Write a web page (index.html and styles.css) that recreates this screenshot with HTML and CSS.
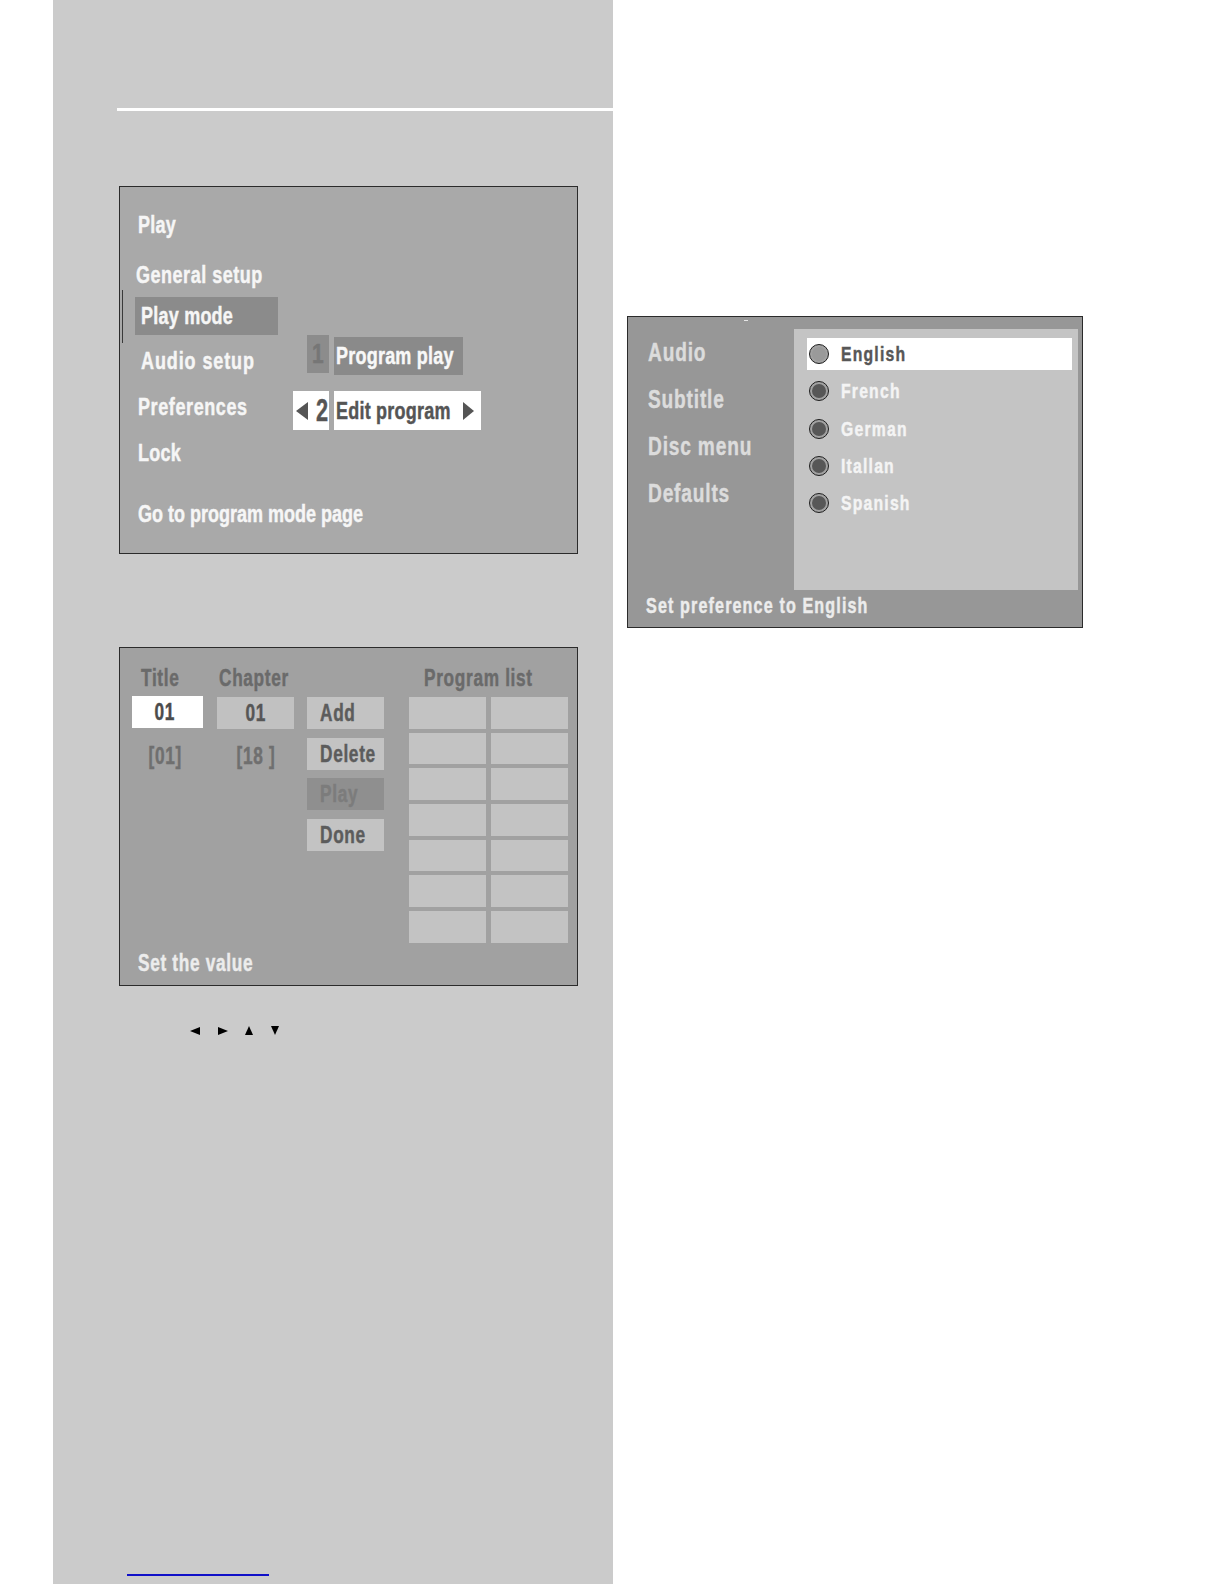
FILE: index.html
```html
<!DOCTYPE html>
<html lang="en">
<head>
<meta charset="utf-8">
<title>Play mode / Preferences</title>
<link rel="stylesheet" href="styles.css">
</head>
<body>
<div class="page">
  <div class="column">
    <div class="rule"></div>

    <section class="panel panel-menu">
      <div class="menu-grid">
        <ul class="menu">
          <li class="m-play"><span class="t">Play</span></li>
          <li class="m-general"><span class="t">General setup</span></li>
          <li class="m-mode"><span class="t">Play mode</span></li>
          <li class="m-audio"><span class="t">Audio setup</span></li>
          <li class="m-pref"><span class="t">Preferences</span></li>
          <li class="m-lock"><span class="t">Lock</span></li>
        </ul>
        <div class="submenu">
          <div class="sub-row">
            <span class="sub-num num-dim"><span class="t tc">1</span></span>
            <span class="sub-label label-dim"><span class="t">Program play</span></span>
          </div>
          <div class="sub-row active">
            <span class="sub-num num-active"><span class="tri tri-left"></span><span class="t">2</span></span>
            <span class="sub-label label-active"><span class="t">Edit program</span><span class="tri tri-right"></span></span>
          </div>
        </div>
      </div>
      <div class="panel-foot foot-menu"><span class="t">Go to program mode page</span></div>
    </section>

    <section class="panel panel-program">
      <div class="prog-cols">
        <div class="pcol pcol-title">
          <div class="phead"><span class="t">Title</span></div>
          <div class="pbox pbox-white"><span class="t tc">01</span></div>
          <div class="prange"><span class="t tc">[01]</span></div>
        </div>
        <div class="pcol pcol-chapter">
          <div class="phead"><span class="t">Chapter</span></div>
          <div class="pbox"><span class="t tc">01</span></div>
          <div class="prange"><span class="t tc">[18 ]</span></div>
        </div>
        <div class="pcol pcol-btns">
          <div class="phead"></div>
          <div class="pbtn"><span class="t">Add</span></div>
          <div class="pbtn"><span class="t">Delete</span></div>
          <div class="pbtn pbtn-dim"><span class="t">Play</span></div>
          <div class="pbtn"><span class="t">Done</span></div>
        </div>
        <div class="pcol pcol-list">
          <div class="phead phead-list"><span class="t">Program list</span></div>
          <div class="plist">
            <span></span><span></span><span></span><span></span>
            <span></span><span></span><span></span><span></span>
            <span></span><span></span><span></span><span></span>
            <span></span><span></span>
          </div>
        </div>
      </div>
      <div class="panel-foot foot-program"><span class="t">Set the value</span></div>
    </section>

    <div class="arrows">
      <span class="arrow a-left"></span>
      <span class="arrow a-right"></span>
      <span class="arrow a-up"></span>
      <span class="arrow a-down"></span>
    </div>

    <div class="link-line"></div>
  </div>

  <section class="panel panel-pref">
    <ul class="pref-labels">
      <li><span class="t">Audio</span></li>
      <li><span class="t">Subtitle</span></li>
      <li><span class="t">Disc menu</span></li>
      <li><span class="t">Defaults</span></li>
    </ul>
    <ul class="lang-list">
      <li class="lang current"><span class="radio"></span><span class="t">English</span></li>
      <li class="lang"><span class="radio"></span><span class="t">French</span></li>
      <li class="lang"><span class="radio"></span><span class="t">German</span></li>
      <li class="lang"><span class="radio"></span><span class="t">Itallan</span></li>
      <li class="lang"><span class="radio"></span><span class="t">Spanish</span></li>
    </ul>
    <div class="pref-foot"><span class="t">Set preference to English</span></div>
  </section>
</div>
</body>
</html>
```

FILE: styles.css
```css
* { box-sizing: border-box; }

html, body {
  margin: 0;
  padding: 0;
  background: #ffffff;
}

body {
  font-family: "Liberation Sans", Arial, sans-serif;
  font-weight: bold;
}

ul { list-style: none; margin: 0; padding: 0; }

/* condensed look: text drawn narrower than the regular face */
.t {
  display: inline-block;
  white-space: nowrap;
  transform: scaleX(0.75);
  transform-origin: 0 50%;
  -webkit-text-stroke: 0.45px currentColor;
}

.t.tc { transform-origin: 50% 50%; }

.page {
  display: flex;
  align-items: flex-start;
  width: 1224px;
  height: 1584px;
  overflow: hidden;
}

.column {
  margin-left: 53px;
  width: 560px;
  height: 1584px;
  background: #cbcbcb;
  display: flex;
  flex-direction: column;
  padding-top: 108px;
}

.rule {
  margin-left: 64px;
  width: 496px;
  height: 3px;
  background: #ffffff;
}

.panel {
  border: 1px solid #2b2b2b;
}

/* ---------- top panel: setup menu ---------- */
.panel-menu {
  margin-top: 75px;
  margin-left: 66px;
  width: 459px;
  height: 368px;
  background: #a9a9a9;
  display: flex;
  flex-direction: column;
  color: #f6f6f6;
  font-size: 24px;
  letter-spacing: 0.3px;
}

.menu-grid {
  display: flex;
  padding-top: 14px;
}

.menu {
  width: 173px;
  flex: none;
  padding-left: 18px;
}

.menu li {
  white-space: nowrap;
}

.menu .m-play { height: 48px; line-height: 48px; }
.menu .m-general { height: 48px; line-height: 45px; padding-top: 3px; margin-left: -2px; letter-spacing: 0.7px; }
.menu .m-mode {
  position: relative;
  height: 38px;
  line-height: 38px;
  width: 143px;
  margin-left: -3px;
  padding-left: 6px;
  background: #8b8b8b;
}
.menu .m-mode::before {
  content: "";
  position: absolute;
  left: -13px;
  top: -7px;
  width: 1px;
  height: 53px;
  background: #3a3a3a;
}
.menu .m-audio { height: 52px; line-height: 52px; margin-left: 3px; letter-spacing: 1.2px; }
.menu .m-pref { height: 39px; line-height: 39px; letter-spacing: 0.8px; }
.menu .m-lock { height: 54px; line-height: 54px; }

.submenu {
  padding-top: 135px;
}

.sub-row {
  display: flex;
  gap: 5px;
  height: 39px;
  margin-left: 14px;
}

.sub-row.active {
  margin-top: 16px;
  margin-left: 0;
}

.sub-num {
  display: flex;
  align-items: center;
  flex: none;
}

.num-dim {
  width: 22px;
  justify-content: center;
  background: #8c8c8c;
  color: #767676;
  font-size: 28px;
  margin-top: -1px;
  height: 38px;
}

.num-active {
  width: 36px;
  background: #ffffff;
  color: #555555;
  font-size: 32px;
  padding-left: 3px;
  gap: 8px;
}

.num-active .t { transform: scaleX(0.68); }

.sub-label {
  display: flex;
  align-items: center;
  padding-left: 2px;
  white-space: nowrap;
  flex: none;
  overflow: hidden;
}

.label-dim {
  width: 129px;
  background: #8a8a8a;
  color: #f8f8f8;
  margin-top: 1px;
  height: 38px;
}

.label-active {
  width: 147px;
  background: #ffffff;
  color: #555555;
  padding-right: 7px;
}

.label-active .t { width: 112px; }

.tri {
  display: inline-block;
  width: 0;
  height: 0;
  flex: none;
  border-top: 9px solid transparent;
  border-bottom: 9px solid transparent;
}

.tri-left { border-right: 12px solid #555555; }
.tri-right { border-left: 11px solid #555555; margin-left: auto; }

.panel-foot {
  margin-top: auto;
  padding-left: 18px;
  white-space: nowrap;
}

.foot-menu {
  height: 40px;
  line-height: 40px;
  margin-bottom: 19px;
  letter-spacing: 0;
}

/* ---------- bottom panel: program ---------- */
.panel-program {
  margin-top: 93px;
  margin-left: 66px;
  width: 459px;
  height: 339px;
  background: #a1a1a1;
  display: flex;
  flex-direction: column;
  font-size: 23px;
  letter-spacing: 0.9px;
  padding-top: 12px;
}

.prog-cols {
  display: flex;
  padding-left: 12px;
}

.pcol { display: flex; flex-direction: column; flex: none; }

.pcol-title { width: 71px; }
.pcol-chapter { width: 77px; margin-left: 14px; }
.pcol-btns { width: 77px; margin-left: 13px; gap: 8.5px; }
.pcol-list { width: 159px; margin-left: 25px; }

.phead {
  height: 37px;
  line-height: 37px;
  color: #6a6a6a;
  white-space: nowrap;
}

.pcol-btns .phead { margin-bottom: -8.5px; }

.pcol-title .phead { padding-left: 9px; }
.pcol-chapter .phead { padding-left: 2px; }
.phead-list { padding-left: 15px; }

.pbox {
  height: 32px;
  display: flex;
  align-items: center;
  justify-content: center;
  background: #c1c1c1;
  color: #565656;
}

.pbox-white {
  margin-top: -1px;
  margin-bottom: 1px;
  background: #ffffff;
  color: #4c4c4c;
  padding-right: 5px;
}

.prange {
  height: 54px;
  display: flex;
  align-items: center;
  justify-content: center;
  color: #6f6f6f;
}

.pcol-title .prange { padding-right: 5px; }

.pbtn {
  height: 32px;
  line-height: 32px;
  padding-left: 13px;
  background: #c3c3c3;
  color: #5c5c5c;
  white-space: nowrap;
}

.pbtn-dim {
  background: #8f8f8f;
  color: #7c7c7c;
}

.plist {
  display: grid;
  grid-template-columns: 77px 77px;
  grid-auto-rows: 31.7px;
  column-gap: 5px;
  row-gap: 4px;
}

.plist span { background: #c3c3c3; }

.foot-program {
  color: #ececec;
  height: 30px;
  line-height: 30px;
  margin-bottom: 7px;
  padding-left: 18px;
}

/* ---------- arrows legend ---------- */
.arrows {
  margin-top: 38px;
  padding-left: 137px;
  display: flex;
  align-items: center;
  gap: 17.5px;
  height: 14px;
}

.arrow {
  display: block;
  width: 0;
  height: 0;
}

.a-left {
  border-top: 4px solid transparent;
  border-bottom: 4px solid transparent;
  border-right: 10px solid #000000;
}

.a-right {
  border-top: 4px solid transparent;
  border-bottom: 4px solid transparent;
  border-left: 10px solid #000000;
}

.a-up {
  border-left: 4.5px solid transparent;
  border-right: 4.5px solid transparent;
  border-bottom: 9px solid #000000;
  margin-top: -1px;
}

.a-down {
  border-left: 4.5px solid transparent;
  border-right: 4.5px solid transparent;
  border-top: 9px solid #000000;
  margin-top: -2px;
}

.link-line {
  margin-top: auto;
  margin-bottom: 8px;
  margin-left: 74px;
  width: 142px;
  height: 2px;
  background: #1010c8;
}

/* ---------- right panel: preferences ---------- */
.panel-pref {
  position: relative;
  margin-top: 316px;
  margin-left: 14px;
  width: 456px;
  height: 312px;
  background: #979797;
  display: grid;
  grid-template-columns: 166px 284px;
  grid-template-rows: 261px 1fr;
  padding-top: 12px;
}

.panel-pref::before {
  content: "";
  position: absolute;
  left: 116px;
  top: 3px;
  width: 4px;
  height: 1px;
  background: #e6e6e6;
}

.pref-labels {
  padding-left: 20px;
  color: #dcdcdc;
  font-size: 25.5px;
  letter-spacing: 1.1px;
}

.pref-labels li {
  height: 47px;
  line-height: 47px;
  white-space: nowrap;
}

.lang-list {
  background: #c4c4c4;
  padding: 9px 6px 0 13px;
  display: flex;
  flex-direction: column;
  gap: 5.3px;
  font-size: 21px;
  letter-spacing: 1.6px;
  color: #f4f4f4;
}

.lang {
  display: flex;
  align-items: center;
  height: 32px;
  padding-left: 2px;
  white-space: nowrap;
}

.lang.current {
  background: #ffffff;
  color: #575757;
}

.radio {
  width: 20px;
  height: 20px;
  border-radius: 50%;
  border: 1px solid #1e1e1e;
  background: #a2a2a2;
  display: flex;
  align-items: center;
  justify-content: center;
  margin-right: 12px;
  flex: none;
}

.radio::after {
  content: "";
  width: 14px;
  height: 14px;
  border-radius: 50%;
  background: #575757;
}

.lang.current .radio::after { background: #9a9a9a; }

.pref-foot {
  grid-column: 1 / 3;
  padding-left: 18px;
  line-height: 32px;
  height: 32px;
  font-size: 21.5px;
  letter-spacing: 1.5px;
  color: #ececec;
  white-space: nowrap;
}
```
